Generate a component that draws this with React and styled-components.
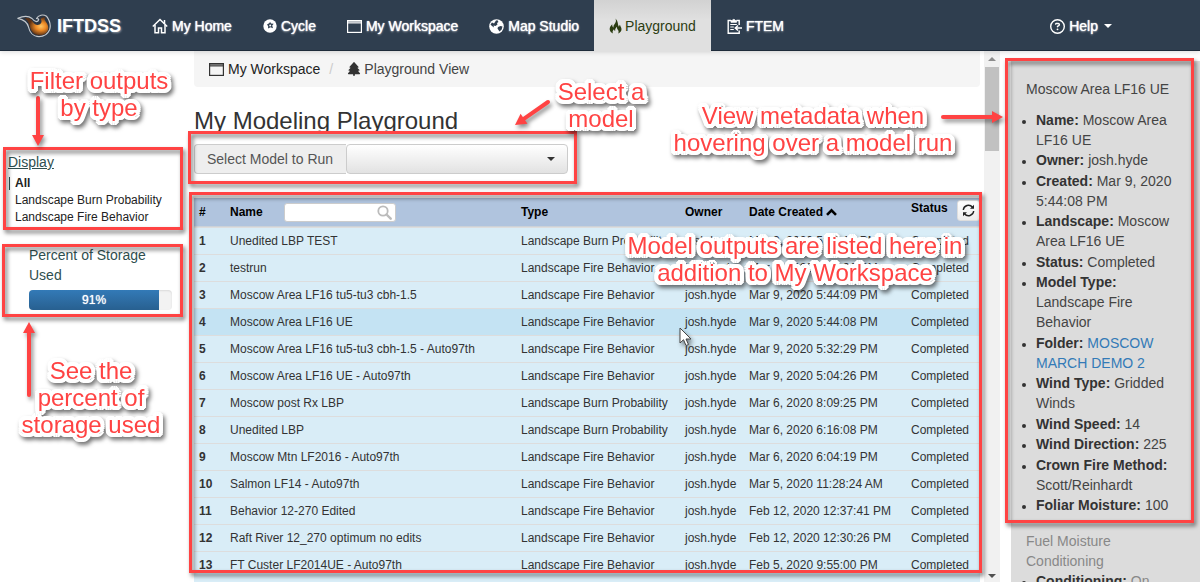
import React from "react";
import styled, { createGlobalStyle, css } from "styled-components";
import { FaTree, FaRegCircleQuestion } from "react-icons/fa6";

const RED = "#ff4343";

const GlobalStyle = createGlobalStyle`
  *, *::before, *::after { box-sizing: border-box; }
  body {
    margin: 0;
    background: #fff;
    color: #333;
    font: 14px/20px "Liberation Sans", Arial, Helvetica, sans-serif;
  }
`;

const Page = styled.div`
  position: relative;
  display: flex;
  flex-direction: column;
  height: 100vh;
  overflow: hidden;
`;

/* ---------- navigation bar ---------- */

const NavBar = styled.nav`
  display: flex;
  flex: none;
  height: 51px;
  padding-right: 73px;
  background: #2f3e4f;
  border-bottom: 1px solid #1e2b3a;
  box-shadow: 0 1px 5px rgba(0, 0, 0, 0.15);
  position: relative;
`;

const Brand = styled.a`
  display: flex;
  align-items: center;
  gap: 6px;
  width: 136px;
  padding: 1px 0 0 17px;
  color: #fff;
  font-size: 18px;
  font-weight: bold;
  text-decoration: none;
  text-shadow: 1px 1px 2px #8a94a0;
`;

const NavLink = styled.a`
  display: flex;
  align-items: center;
  gap: 4px;
  height: 51px;
  padding: 1px 15px 0 16px;
  color: #fff;
  text-decoration: none;
  white-space: nowrap;
  text-shadow: 0 0 1px #fff, 0 1px 2px rgba(255, 255, 255, 0.5);
  ${(p) =>
    p.$active &&
    css`
      gap: 3px;
      padding-left: 15px;
      color: #2c3d12;
      background: linear-gradient(#d2d2d2, #e0e0e0 20px);
      text-shadow: none;
    `}
`;

const Spacer = styled.div`
  flex: 1;
`;

const Caret = styled.span`
  margin-left: ${(p) => p.$gap || 0}px;
  border: 4px solid transparent;
  border-top-color: currentColor;
  border-bottom: 0;
`;

/* ---------- page areas ---------- */

const Body = styled.div`
  flex: 1;
  min-height: 0;
  display: grid;
  grid-template-columns: 184px minmax(0, 1fr) 16px 200px;
`;

const Sidebar = styled.aside`
  padding: 96px 1px 0 3px;
`;

const Main = styled.main`
  display: flex;
  flex-direction: column;
  padding: 0 4px 0 10px;
`;

/* ---------- annotation frames and captions ---------- */

const Frame = styled.div`
  position: absolute;
  inset: ${(p) => p.$inset || "0"};
  border: 3px solid ${RED};
  filter: drop-shadow(2px 3px 2px rgba(0, 0, 0, 0.55));
  pointer-events: none;
`;

/* a ring of offsets that gives letters an even, round white edge */
const halo = [
  [4, 0], [-4, 0], [0, 4], [0, -4],
  [3, 3], [-3, 3], [3, -3], [-3, -3],
  [4, 2], [-4, 2], [4, -2], [-4, -2],
  [2, 4], [-2, 4], [2, -4], [-2, -4],
  [2, 0], [-2, 0], [0, 2], [0, -2],
]
  .map(([x, y]) => `${x}px ${y}px 0 #fff`)
  .join(", ");

const Caption = styled.p`
  position: absolute;
  left: ${(p) => p.$x}px;
  top: ${(p) => p.$y}px;
  margin: 0;
  transform: translateX(-50%);
  color: ${RED};
  font-size: 24px;
  line-height: 27px;
  text-align: center;
  white-space: nowrap;
  text-shadow: ${halo};
  filter: drop-shadow(2px 3px 2px rgba(0, 0, 0, 0.55));
`;

const Drawing = styled.svg`
  position: absolute;
  left: ${(p) => p.$x}px;
  top: ${(p) => p.$y}px;
  overflow: visible;
  filter: drop-shadow(2px 3px 2px rgba(0, 0, 0, 0.45));
`;

/* ---------- left column ---------- */

const FilterBox = styled.section`
  position: relative;
  height: 83px;
  padding: 5px 5px 0;
`;

const FilterTitle = styled.a`
  display: block;
  color: #2f4f4f;
  text-decoration: underline;
`;

const FilterList = styled.ul`
  list-style: none;
  margin: 3px 0 0 1px;
  padding: 0;
  font-size: 12px;
  line-height: 17px;
`;

const FilterItem = styled.li`
  display: flex;
  align-items: center;
  height: 17px;
  &::before {
    content: "";
    width: 1px;
    height: 13px;
    margin-right: 5px;
    background: ${(p) => (p.$on ? "#2f4f4f" : "transparent")};
  }
  a {
    color: #222;
    text-decoration: none;
    white-space: nowrap;
    font-weight: ${(p) => (p.$on ? "bold" : "normal")};
  }
`;

const StorageBox = styled.section`
  position: relative;
  height: 73px;
  margin: 14px 0 0 -1px;
  padding: 1px 11px 0 27px;
  color: #2f4f4f;
`;

const StorageTitle = styled.div`
  height: 45px;
`;

const Progress = styled.div`
  height: 20px;
  background: #f2f2f2;
  border-radius: 4px;
  overflow: hidden;
  box-shadow: inset 0 1px 2px rgba(0, 0, 0, 0.1);
`;

const ProgressFill = styled.div`
  height: 100%;
  background: linear-gradient(#337ab7, #286090);
  color: #fff;
  font-size: 12px;
  text-align: center;
  text-shadow: 0 0 1px #fff;
`;

/* ---------- main column ---------- */

const Breadcrumb = styled.div`
  display: flex;
  align-items: center;
  height: 36px;
  padding: 0 15px;
  background: #f5f5f5;
  border-radius: 0 0 4px 4px;
  color: #444;
`;

const Crumb = styled.a`
  display: flex;
  align-items: center;
  gap: ${(p) => (p.$current ? 3 : 4)}px;
  color: ${(p) => (p.$current ? "#444" : "#222")};
  text-decoration: none;
`;

const Slash = styled.span`
  width: 27px;
  padding-left: 9px;
  color: #ccc;
`;

const Title = styled.h1`
  margin: 20px 0 10px;
  font-size: 24px;
  line-height: 27px;
  font-weight: normal;
`;

const Picker = styled.div`
  position: relative;
  display: flex;
  width: 374px;
  height: 30px;
  color: #555;
`;

const PickerLabel = styled.label`
  width: 152px;
  padding-left: 12px;
  line-height: 28px;
  background: #eee;
  border: 1px solid #ccc;
  border-right: 0;
  border-radius: 4px 0 0 4px;
`;

const SelectWrap = styled.div`
  flex: 1;
  display: grid;
  align-items: center;
  color: #333;
  > * {
    grid-area: 1 / 1;
  }
  ${Caret} {
    justify-self: end;
    margin-right: 13px;
    pointer-events: none;
  }
`;

const ModelSelect = styled.select`
  appearance: none;
  width: 100%;
  height: 30px;
  padding: 0 28px 0 12px;
  border: 1px solid #ccc;
  border-radius: 4px;
  background: linear-gradient(#fff, #e2e2e2);
  font: inherit;
`;

const TableArea = styled.div`
  position: relative;
  flex: 1;
  margin-top: 24px;
  background: #d9edf7;
`;

const Table = styled.table`
  width: 100%;
  table-layout: fixed;
  border-collapse: separate;
  border-spacing: 0;
  font-size: 12px;
  line-height: 17px;
`;

const Th = styled.th`
  width: ${(p) => p.$w || "auto"};
  height: 29px;
  padding: 0 0 0 5px;
  background: #b0c4de;
  border-bottom: 1px solid #ccd2d8;
  color: #000;
  text-align: left;
  white-space: nowrap;
`;

const HeadCell = styled.div`
  display: flex;
  align-items: ${(p) => (p.$top ? "flex-start" : "center")};
  gap: ${(p) => p.$gap || 0}px;
  height: 24px;
`;

const SearchBox = styled.span`
  display: flex;
  align-items: center;
  width: 112px;
  height: 19px;
  padding: 0 3px;
  background: #fff;
  border: 1px solid #ccc;
  border-radius: 3px;
  input {
    flex: 1;
    min-width: 0;
    padding: 0;
    border: 0;
    outline: 0;
    background: none;
    font: inherit;
  }
`;

const RefreshButton = styled.button`
  display: flex;
  align-items: center;
  justify-content: center;
  width: 23px;
  height: 21px;
  padding: 0;
  border: 1px solid #ddd;
  border-radius: 3px;
  background: linear-gradient(#fff, #ececec);
`;

const Row = styled.tr`
  background: ${(p) => (p.$hover ? "#c4e3f3" : "#d9edf7")};
  td,
  th {
    height: 27px;
    padding: 0 0 0 5px;
    border-top: 1px solid #ddd;
    text-align: left;
    white-space: nowrap;
  }
`;

/* ---------- page scroll bar ---------- */

const ScrollTrack = styled.div`
  display: flex;
  flex-direction: column;
  align-items: center;
  padding: 6px 0 4px;
  background: #f1f1f1;
`;

const ScrollArrow = styled.span`
  border: 4px solid transparent;
  ${(p) =>
    p.$up
      ? "border-top: 0; border-bottom-color: #8c8c8c;"
      : "border-bottom: 0; border-top-color: #505050;"}
`;

const ScrollThumb = styled.div`
  width: 14px;
  height: 84px;
  margin: 6px 0 auto;
  background: #c1c1c1;
`;

/* ---------- metadata panel ---------- */

const Details = styled.aside`
  position: relative;
  overflow: hidden;
  padding: 10px 0 0 11px;
`;

const Card = styled.section`
  height: ${(p) => (p.$dim ? "auto" : "463px")};
  padding: ${(p) => (p.$dim ? "7px 15px 0" : "18px 20px 0 15px")};
  background: #dcdcdc;
  color: ${(p) => (p.$dim ? "#888" : "#444")};
`;

const CardTitle = styled.div`
  margin-bottom: ${(p) => (p.$tight ? 0 : 11)}px;
`;

const Facts = styled.ul`
  margin: 0;
  padding-left: 10px;
  li:nth-child(even) {
    margin-bottom: 1px;
  }
  li::marker {
    color: #333;
    font-size: 12px;
  }
  b {
    color: #333;
  }
  a {
    color: #337ab7;
    text-decoration: none;
  }
`;

/* ---------- icons ---------- */

const Logo = () => (
  <svg width="34" height="25" viewBox="0 0 34 25" aria-hidden="true">
    <defs>
      <radialGradient id="ember" cx="0.68" cy="0.5" r="0.5">
        <stop offset="0" stopColor="#ffc766" />
        <stop offset="0.45" stopColor="#ee8a25" />
        <stop offset="1" stopColor="#5c3216" />
      </radialGradient>
    </defs>
    <path
      d="M.8 5.300C7 2.500 12 3 15 5.500c1.800 2.300 4 4 6 2.500 1.500-2 .2-2.500-1.500-2.500C21.500 2 26 1 29.500 3.200 33 8 34 13 32.500 17 30.500 21.500 27 23.600 22 23.600c-6 0-9.500-4.600-10.500-9.600C10.500 9.500 7 6.500.8 5.300z"
      fill="#2b3543"
      stroke="#c3c8cd"
      strokeWidth="1.200"
      strokeLinejoin="round"
    />
    <path
      d="M8 5.200c4-.7 6.300.8 8 3.800 1.500 2.500 4 3.600 6.500 2.500 2.500-1.200 2.500-4 1-5.500 1.500-1.500 3.500-2 5-1.500-1.500 1-1 2.500.5 4.500 3 4 3 8.500 0 11-4 3.500-11 3-14-1.500C12.500 15 13 8.500 8 5.200z"
      fill="url(#ember)"
    />
  </svg>
);

const HomeIcon = () => (
  <svg width="16" height="16" viewBox="0 0 16 16" fill="none" stroke="#fff" strokeWidth="1.500" aria-hidden="true">
    <path d="M.8 8.500 8 1.500l7.200 7" />
    <path d="M3 7v7.700h3.500V10h3v4.700H13V7M12.500 2v4" />
  </svg>
);

const CycleIcon = () => (
  <svg width="14" height="14" viewBox="0 0 14 14" aria-hidden="true">
    <circle cx="7" cy="7" r="6.700" fill="#fff" />
    <path d="M4 5.500 6.500 4 7 2.800l1 1.700 2.700.2-1.500 1.800.8 2.700-2.500-1L5 9.500l.2-2.200z" fill="#2f3e4f" />
    <circle cx="7.200" cy="6.500" r="1" fill="#fff" />
  </svg>
);

const WindowIcon = ({ color = "#fff" }) => (
  <svg width="15" height="13" viewBox="0 0 15 13" aria-hidden="true">
    <rect x=".6" y=".6" width="13.800" height="11.800" fill="none" stroke={color} strokeWidth="1.200" />
    <path d="M1 2.400h13" stroke={color} strokeWidth="2.400" opacity=".75" />
  </svg>
);

const GlobeIcon = () => (
  <svg width="15" height="15" viewBox="0 0 15 15" aria-hidden="true">
    <circle cx="7.500" cy="7.500" r="7.300" fill="#fff" />
    <path
      d="M7 1.500 8.500 1.200 9.500 3 8 4l.5 1.500L6.500 7 4.500 6.500 5 8.500 3 7 1.500 5.500 3 3.500 5 4.500zM9 8l2.500-1 2 .5-.8 3L10.500 12.500 9.500 11l-1-1.500z"
      fill="#2f3e4f"
    />
  </svg>
);

const FireIcon = () => (
  <svg width="13" height="16" viewBox="0 0 13 16" fill="#2c3d12" aria-hidden="true">
    <path d="M6.500.5C7.500 3 6.800 4.500 5.300 6.500 4.500 7.600 4.300 8.500 4.600 9.600 3.500 9 3 7.800 3.300 6.300 1.500 7.800.5 9.500.7 11.500c.2 2 1.500 3.300 3.300 4-.8-1.700-.3-3 1-4.300.2 1 .6 1.500 1.200 1.800C6 11.500 6.500 10 8 8.800c-.2 1.500.2 2.300 1 3.200.8 1 .8 2.300.2 3.500 2-.8 3.300-2.300 3.300-4.300 0-1.800-1.200-2.800-1.500-4.500-.7.500-1 1.200-1 2C8.500 7 9.500 3.500 6.500.5z" />
  </svg>
);

const ReportIcon = () => (
  <svg width="15" height="16" viewBox="0 0 15 16" fill="none" stroke="#fff" strokeWidth="1.400" aria-hidden="true">
    <path d="M4 2.500H1.200v12.700h11V12.500M9.500 2.500h2.700V7" />
    <path d="M4 4.300V2.500h1.300C5.500 1 8 1 8.200 2.500h1.300v1.800z" fill="#fff" strokeWidth=".8" />
    <path d="M3.300 6.500h6.500M3.300 9h3.500M3.300 11.500h3.500" strokeWidth="1.200" />
    <path d="M15 10H8.500M11 7.500 8.300 10l2.700 2.500" strokeWidth="1.500" />
  </svg>
);

const SearchIcon = () => (
  <svg width="15" height="15" viewBox="0 0 15 15" fill="none" stroke="#bbb" aria-hidden="true">
    <circle cx="6" cy="6" r="4.700" strokeWidth="1.800" />
    <path d="m9.500 9.500 4.200 4.200" strokeWidth="2.400" strokeLinecap="round" />
  </svg>
);

const SortIcon = () => (
  <svg width="11" height="8" viewBox="0 0 11 8" fill="none" stroke="#000" strokeWidth="2.600" aria-hidden="true">
    <path d="m1 6.800 4.500-4.500L10 6.800" />
  </svg>
);

const RefreshIcon = () => (
  <svg width="13" height="13" viewBox="0 0 13 13" fill="none" stroke="#222" strokeWidth="1.400" aria-hidden="true">
    <path d="M1.300 6A5.200 5.200 0 0 1 10.500 3.200M11.700 7A5.200 5.200 0 0 1 2.500 9.800" />
    <path d="M12 .8v4H8zM1 12.200v-4h4z" fill="#222" stroke="none" />
  </svg>
);

const Arrow = ({ x, y, dx, dy }) => {
  const len = Math.hypot(dx, dy);
  const angle = (Math.atan2(dy, dx) * 180) / Math.PI;
  return (
    <Drawing $x={x} $y={y} width="1" height="1" aria-hidden="true">
      <g transform={`rotate(${angle})`}>
        <path d={`M0 0H${len - 9}`} stroke={RED} strokeWidth="4" strokeLinecap="round" />
        <path d={`M${len - 11} -6 ${len} 0 ${len - 11} 6z`} fill={RED} />
      </g>
    </Drawing>
  );
};

/* ---------- data ---------- */

const FIRE = "Landscape Fire Behavior";
const BURN = "Landscape Burn Probability";

const runs = [
  ["Unedited LBP TEST", BURN, "Mar 9, 2020 5:54:12 PM"],
  ["testrun", FIRE, "Mar 9, 2020 5:48:31 PM"],
  ["Moscow Area LF16 tu5-tu3 cbh-1.5", FIRE, "Mar 9, 2020 5:44:09 PM"],
  ["Moscow Area LF16 UE", FIRE, "Mar 9, 2020 5:44:08 PM"],
  ["Moscow Area LF16 tu5-tu3 cbh-1.5 - Auto97th", FIRE, "Mar 9, 2020 5:32:29 PM"],
  ["Moscow Area LF16 UE - Auto97th", FIRE, "Mar 9, 2020 5:04:26 PM"],
  ["Moscow post Rx LBP", BURN, "Mar 6, 2020 8:09:25 PM"],
  ["Unedited LBP", BURN, "Mar 6, 2020 6:16:08 PM"],
  ["Moscow Mtn LF2016 - Auto97th", FIRE, "Mar 6, 2020 6:04:19 PM"],
  ["Salmon LF14 - Auto97th", FIRE, "Mar 5, 2020 11:28:24 AM"],
  ["Behavior 12-270 Edited", FIRE, "Feb 12, 2020 12:37:41 PM"],
  ["Raft River 12_270 optimum no edits", FIRE, "Feb 12, 2020 12:30:26 PM"],
  ["FT Custer LF2014UE - Auto97th", FIRE, "Feb 5, 2020 9:55:00 PM"],
];

const facts = [
  ["Name", "Moscow Area LF16 UE"],
  ["Owner", "josh.hyde"],
  ["Created", "Mar 9, 2020 5:44:08 PM"],
  ["Landscape", "Moscow Area LF16 UE"],
  ["Status", "Completed"],
  ["Model Type", "Landscape Fire Behavior"],
  ["Folder", <a href="#folder">MOSCOW MARCH DEMO 2</a>],
  ["Wind Type", "Gridded Winds"],
  ["Wind Speed", "14"],
  ["Wind Direction", "225"],
  ["Crown Fire Method", "Scott/Reinhardt"],
  ["Foliar Moisture", "100"],
];

const filters = ["All", BURN, FIRE];

export default function App() {
  return (
    <Page>
      <GlobalStyle />
      <NavBar>
        <Brand href="#top"><Logo />IFTDSS</Brand>
        <NavLink href="#home"><HomeIcon />My Home</NavLink>
        <NavLink href="#cycle"><CycleIcon />Cycle</NavLink>
        <NavLink href="#workspace"><WindowIcon />My Workspace</NavLink>
        <NavLink href="#map"><GlobeIcon />Map Studio</NavLink>
        <NavLink href="#playground" $active><FireIcon />Playground</NavLink>
        <NavLink href="#ftem"><ReportIcon />FTEM</NavLink>
        <Spacer />
        <NavLink href="#help"><FaRegCircleQuestion size={15} />Help<Caret $gap={2} /></NavLink>
      </NavBar>

      <Body>
        <Sidebar>
          <FilterBox>
            <FilterTitle href="#display">Display</FilterTitle>
            <FilterList>
              {filters.map((name, i) => (
                <FilterItem key={name} $on={i === 0}><a href="#filter">{name}</a></FilterItem>
              ))}
            </FilterList>
            <Frame />
          </FilterBox>
          <StorageBox>
            <StorageTitle>Percent of Storage Used</StorageTitle>
            <Progress role="progressbar" aria-valuenow={91} aria-label="Percent of Storage Used">
              <ProgressFill style={{ width: "91%" }}>91%</ProgressFill>
            </Progress>
            <Frame />
          </StorageBox>
        </Sidebar>

        <Main>
          <Breadcrumb>
            <Crumb href="#workspace"><WindowIcon color="#333" />My Workspace</Crumb>
            <Slash>/</Slash>
            <Crumb href="#playground" $current><FaTree size={14} color="#333" />Playground View</Crumb>
          </Breadcrumb>
          <Title>My Modeling Playground</Title>
          <Picker>
            <PickerLabel htmlFor="model">Select Model to Run</PickerLabel>
            <SelectWrap>
              <ModelSelect id="model" defaultValue=""><option value="" /></ModelSelect>
              <Caret />
            </SelectWrap>
            <Frame $inset="-13px -9px -10px -6px" />
          </Picker>
          <TableArea>
            <Table>
              <thead>
                <tr>
                  <Th $w="31px">#</Th>
                  <Th>
                    <HeadCell $gap={21}>
                      Name
                      <SearchBox><input aria-label="Search by name" /><SearchIcon /></SearchBox>
                    </HeadCell>
                  </Th>
                  <Th $w="164px">Type</Th>
                  <Th $w="64px">Owner</Th>
                  <Th $w="162px"><HeadCell $gap={3}>Date Created <SortIcon /></HeadCell></Th>
                  <Th $w="74px">
                    <HeadCell $top $gap={9}>
                      Status
                      <RefreshButton aria-label="Refresh"><RefreshIcon /></RefreshButton>
                    </HeadCell>
                  </Th>
                </tr>
              </thead>
              <tbody>
                {runs.map(([name, type, date], i) => (
                  <Row key={name} $hover={i === 3}>
                    <th scope="row">{i + 1}</th>
                    <td>{name}</td>
                    <td>{type}</td>
                    <td>josh.hyde</td>
                    <td>{date}</td>
                    <td>Completed</td>
                  </Row>
                ))}
              </tbody>
            </Table>
            <Frame $inset="-6px -2px 9px -5px" />
          </TableArea>
        </Main>

        <ScrollTrack aria-hidden="true">
          <ScrollArrow $up />
          <ScrollThumb />
          <ScrollArrow />
        </ScrollTrack>

        <Details>
          <Card>
            <CardTitle>Moscow Area LF16 UE</CardTitle>
            <Facts>
              {facts.map(([label, value]) => (
                <li key={label}><b>{label}:</b> {value}</li>
              ))}
            </Facts>
          </Card>
          <Card $dim>
            <CardTitle $tight>Fuel Moisture Conditioning</CardTitle>
            <Facts><li><b>Conditioning:</b> On</li></Facts>
          </Card>
          <Frame $inset="7px 6px 59px 5px" />
        </Details>
      </Body>

      <Arrow x={38} y={98} dx={0} dy={48} />
      <Arrow x={548} y={102} dx={-33} dy={23} />
      <Arrow x={943} y={117} dx={60} dy={0} />
      <Arrow x={29} y={395} dx={0} dy={-73} />

      <Caption $x={99} $y={67}>Filter outputs<br />by type</Caption>
      <Caption $x={601} $y={78}>Select a<br />model</Caption>
      <Caption $x={813} $y={102}>View metadata when<br />hovering over a model run</Caption>
      <Caption $x={795} $y={232}>Model outputs are listed here in<br />addition to My Workspace</Caption>
      <Caption $x={91} $y={357}>See the<br />percent of<br />storage used</Caption>

      <Drawing $x={679} $y={327} width="13" height="20" viewBox="0 0 13 20" aria-hidden="true">
        <path d="M1 1v15l3.500-3.300L7 18.500l2.500-1L7 12h5z" fill="#fff" stroke="#444" strokeWidth="1" />
      </Drawing>
    </Page>
  );
}
